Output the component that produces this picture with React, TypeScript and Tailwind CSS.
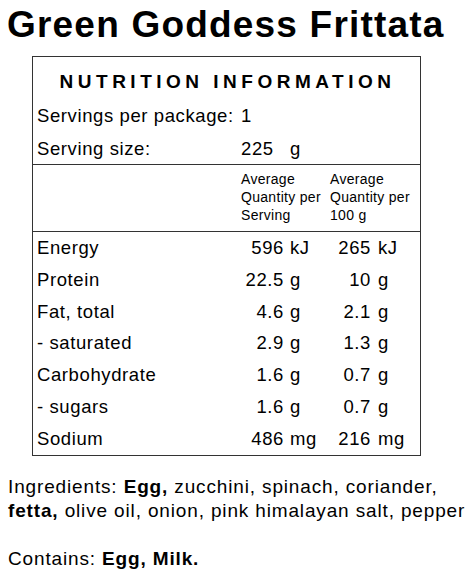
const rows = [
  { label: "Energy", v1: "596", u1: "kJ", v2: "265", u2: "kJ" },
  { label: "Protein", v1: "22.5", u1: "g", v2: "10", u2: "g" },
  { label: "Fat, total", v1: "4.6", u1: "g", v2: "2.1", u2: "g" },
  { label: "- saturated", v1: "2.9", u1: "g", v2: "1.3", u2: "g" },
  { label: "Carbohydrate", v1: "1.6", u1: "g", v2: "0.7", u2: "g" },
  { label: "- sugars", v1: "1.6", u1: "g", v2: "0.7", u2: "g" },
  { label: "Sodium", v1: "486", u1: "mg", v2: "216", u2: "mg" },
];

export default function App() {
  return (
    <div
      className="w-[472px] h-[585px] bg-white text-black"
      style={{ fontFamily: '"Liberation Sans", Arial, sans-serif' }}
    >
      <h1 className="pl-[7px] pt-[5px] text-[37px] leading-[40px] font-bold tracking-[1.2px]">
        Green Goddess Frittata
      </h1>

      <div className="ml-[32px] mt-[11px] w-[389px] border-[1.5px] border-[#333]">
        <div className="pt-[15px] pb-[7px] pl-[2px] text-center text-[19px] leading-[20px] font-bold tracking-[4.5px]">
          NUTRITION INFORMATION
        </div>
        <div className="px-[4px] text-[18.5px] tracking-[0.6px]">
          <div className="flex h-[34px] items-center">
            <span className="w-[204px]">Servings per package:</span>
            <span>1</span>
          </div>
          <div className="flex h-[31px] items-center">
            <span className="w-[204px]">Serving size:</span>
            <span className="w-[49px]">225</span>
            <span>g</span>
          </div>
        </div>
        <div className="border-t-[1.5px] border-[#333] flex pl-[208px] pt-[5px] pb-[7px] text-[14px] leading-[18px] tracking-[0.3px]">
          <div className="w-[89px]">
            Average
            <br />
            Quantity per
            <br />
            Serving
          </div>
          <div>
            Average
            <br />
            Quantity per
            <br />
            100 g
          </div>
        </div>
        <div className="border-t-[1.5px] border-[#333] px-[4px] text-[18.5px] tracking-[0.6px]">
          {rows.map((r) => (
            <div key={r.label} className="flex h-[31.8px] items-center">
              <span className="w-[198px]">{r.label}</span>
              <span className="w-[49px] text-right">{r.v1}</span>
              <span className="w-[42px] pl-[6px]">{r.u1}</span>
              <span className="w-[45px] text-right">{r.v2}</span>
              <span className="pl-[7px]">{r.u2}</span>
            </div>
          ))}
        </div>
      </div>

      <div className="pl-[8px] pt-[19px] text-[19px] leading-[24px] tracking-[0.85px]">
        <p>
          Ingredients: <b>Egg,</b> zucchini, spinach, coriander,
          <br />
          <b>fetta,</b> olive oil, onion, pink himalayan salt, pepper
        </p>
        <p className="mt-[24px]">
          Contains: <b>Egg, Milk.</b>
        </p>
      </div>
    </div>
  );
}
